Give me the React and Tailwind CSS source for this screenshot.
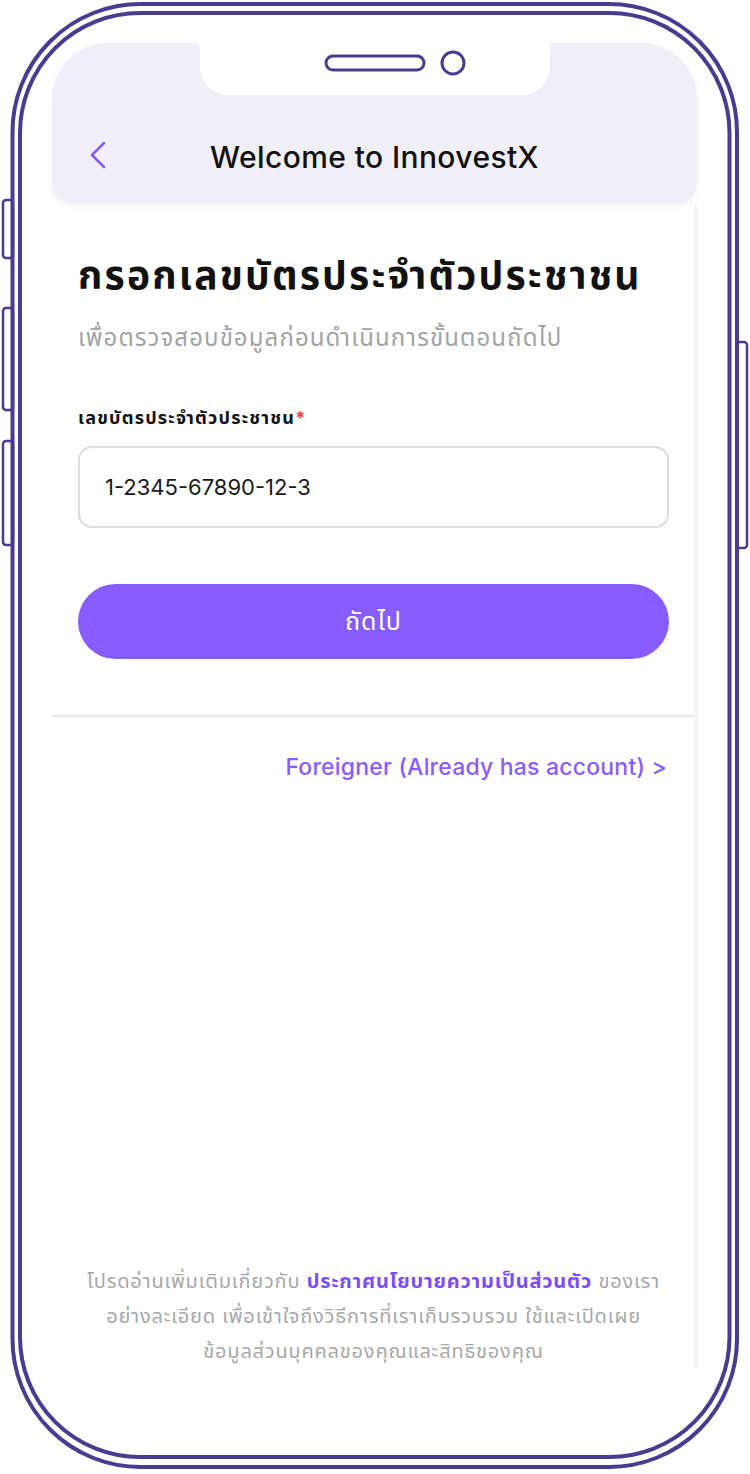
import React from "react";

function PhoneFrame() {
  const c = "#4b3a8f";
  return (
    <svg
      className="absolute inset-0 pointer-events-none"
      width="750"
      height="1474"
      viewBox="0 0 750 1474"
      fill="none"
    >
      {/* side buttons */}
      <rect x="3" y="200" width="10" height="58" rx="3" fill="#fff" stroke={c} strokeWidth="2.5" />
      <rect x="3" y="308" width="10" height="102" rx="3" fill="#fff" stroke={c} strokeWidth="2.5" />
      <rect x="3" y="441" width="10" height="104" rx="3" fill="#fff" stroke={c} strokeWidth="2.5" />
      <rect x="737" y="342" width="10" height="206" rx="3" fill="#fff" stroke={c} strokeWidth="2.5" />
      {/* body outlines */}
      <rect x="12.5" y="4" width="724.5" height="1463" rx="128" stroke={c} strokeWidth="4" fill="none" />
      <rect x="20" y="13" width="709.5" height="1444" rx="120" stroke={c} strokeWidth="4" fill="none" />
      {/* notch */}
      <path
        d="M196 40 L554 40 L554 40 C 551 42 550 46 550 52 L550 65 C 550 83 538 95 520 95 L230 95 C 212 95 200 83 200 65 L200 52 C 200 46 199 42 196 40 Z"
        fill="#fff"
      />
      <rect x="326" y="56" width="98" height="14" rx="7" stroke={c} strokeWidth="3" fill="#fff" />
      <circle cx="453" cy="63" r="11" stroke={c} strokeWidth="3" fill="#fff" />
    </svg>
  );
}

export default function App() {
  return (
    <div
      className="relative w-[750px] h-[1474px] bg-white overflow-hidden"
      style={{ fontFamily: '"Inter", "Noto Sans", "Noto Sans Thai", sans-serif' }}
    >
      <div className="ml-[52px] w-[645px] pt-[43px] flex flex-col">
        <header className="relative h-[160px] rounded-t-[56px] rounded-b-[20px] bg-[#f0eff8] shadow-[0_3px_6px_rgba(60,50,120,0.06)] pt-[96px]">
          <svg
            className="absolute left-[36px] top-[98px]"
            width="20"
            height="28"
            viewBox="0 0 20 28"
            fill="none"
          >
            <polyline points="16,2 4,14 16,26" stroke="#8a5cff" strokeWidth="2.6" strokeLinecap="round" strokeLinejoin="round" />
          </svg>
          <h1 className="h-[36px] leading-[36px] text-center text-[30px] font-medium text-[#111] tracking-[0.4px]">
            Welcome to InnovestX
          </h1>
        </header>

        <main className="flex flex-col border-r-2 border-[#f2f2f6] h-[1166px]">
          <div className="px-[26px] pt-[46px]">
            <h2 className="text-[39px] leading-[52px] font-bold text-[#111] tracking-[2.2px] whitespace-nowrap">
              กรอกเลขบัตรประจำตัวประชาชน
            </h2>
            <p className="mt-[20px] text-[24px] leading-[34px] text-[#a3a3a3] tracking-[1.1px] whitespace-nowrap">
              เพื่อตรวจสอบข้อมูลก่อนดำเนินการขั้นตอนถัดไป
            </p>
            <label className="mt-[49px] block text-[18px] leading-[28px] font-bold text-[#111] tracking-[1.2px]">
              เลขบัตรประจำตัวประชาชน<span className="text-[#ef4444]">*</span>
            </label>
            <div className="mt-[14px] h-[82px] rounded-[14px] border-2 border-[#dcdcdc] flex items-center px-[25px]">
              <span className="text-[22px] text-[#1a1a1a]">1-2345-67890-12-3</span>
            </div>
            <button className="mt-[56px] w-full h-[75px] rounded-full bg-[#865cff] text-white text-[25px] tracking-[1px] flex items-center justify-center">
              ถัดไป
            </button>
          </div>
          <div className="mt-[56px] h-[2px] bg-[#e9e9ec]" />
          <div className="px-[28px] pt-[34px] flex justify-end">
            <a className="text-[23px] leading-[32px] font-medium text-[#8a5cff] tracking-[0.2px]">
              Foreigner (Already has account) &gt;
            </a>
          </div>
          <div className="flex-1" />
          <p className="text-center text-[20px] leading-[35px] text-[#a8a8a8] tracking-[0.8px] whitespace-nowrap">
            โปรดอ่านเพิ่มเติมเกี่ยวกับ{" "}
            <span className="font-bold text-[#7b4dff]">ประกาศนโยบายความเป็นส่วนตัว</span> ของเรา
            <br />
            อย่างละเอียด เพื่อเข้าใจถึงวิธีการที่เราเก็บรวบรวม ใช้และเปิดเผย
            <br />
            ข้อมูลส่วนบุคคลของคุณและสิทธิของคุณ
          </p>
        </main>
      </div>
      <PhoneFrame />
    </div>
  );
}
